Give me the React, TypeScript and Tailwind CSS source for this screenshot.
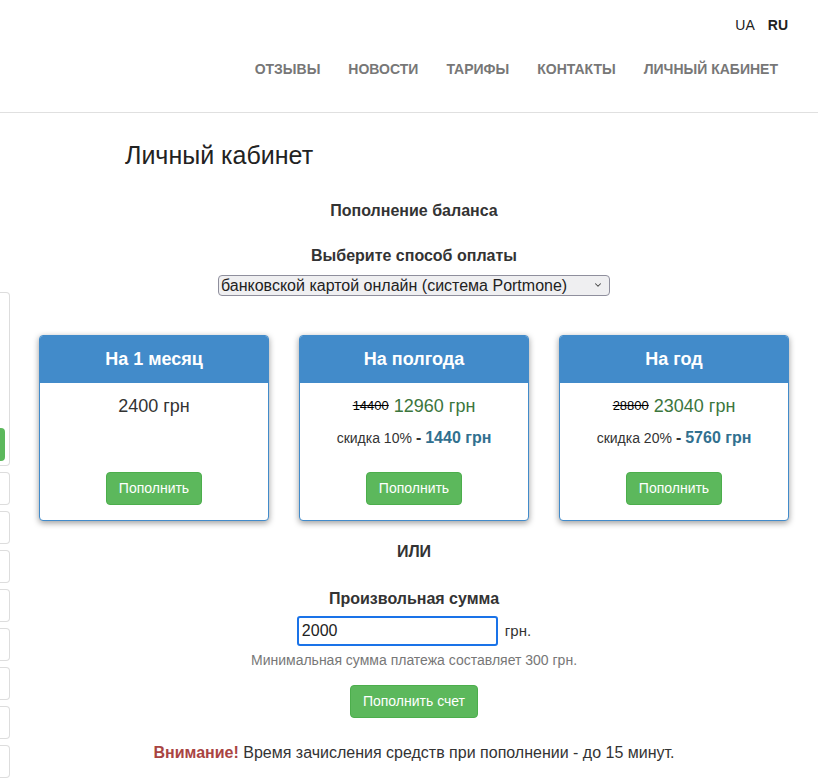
import { ChevronDown } from "lucide-react";

const plans = [
  { title: "На 1 месяц", price: "2400", old: null, discount: null, saved: null },
  { title: "На полгода", price: "12960", old: "14400", discount: "10%", saved: "1440" },
  { title: "На год", price: "23040", old: "28800", discount: "20%", saved: "5760" },
];

const nav = ["Отзывы", "Новости", "Тарифы", "Контакты", "Личный кабинет"];

function PlanCard({ plan }: { plan: (typeof plans)[number] }) {
  return (
    <div className="flex h-[186px] flex-col overflow-hidden rounded-[4px] border border-[#428bca] bg-white shadow-[0_2px_6px_rgba(0,0,0,0.4)]">
      <div className="flex h-[47px] shrink-0 items-center justify-center bg-[#428bca] text-[18px] font-bold text-white">
        {plan.title}
      </div>
      <div className="flex flex-1 flex-col items-center pt-[11px]">
        <div className="flex h-[24px] items-center text-[18px] leading-[24px]">
          {plan.old ? (
            <>
              <span className="mr-[5px] text-[13px] text-black line-through">{plan.old}</span>
              <span className="text-[#3c763d]">{plan.price} грн</span>
            </>
          ) : (
            <span className="text-[#333]">{plan.price} грн</span>
          )}
        </div>
        {plan.discount ? (
          <div className="mt-[10px] flex h-[20px] items-center text-[14px] text-[#333]">
            скидка {plan.discount}
            <span className="ml-[4px] text-[16px] font-bold">-</span>
            <span className="ml-[4px] text-[16px] font-bold text-[#31708f]">{plan.saved} грн</span>
          </div>
        ) : (
          <div className="mt-[10px] h-[20px]" />
        )}
        <button className="mt-[24px] h-[33px] rounded-[4px] border border-[#4cae4c] bg-[#5cb85c] px-[12px] text-[14px] text-white">
          Пополнить
        </button>
      </div>
    </div>
  );
}

function Sidebar() {
  return (
    <div className="flex w-[10px] shrink-0 flex-col gap-[6px] pt-[179px]">
      <div className="flex h-[174px] flex-col justify-end rounded-r-[4px] border border-l-0 border-[#ddd] pb-[4px]">
        <div className="h-[33px] w-[5px] rounded-r-[4px] bg-[#5cb85c]" />
      </div>
      {Array.from({ length: 8 }).map((_, i) => (
        <div key={i} className="h-[33px] rounded-r-[4px] border border-l-0 border-[#ddd]" />
      ))}
    </div>
  );
}

export default function App() {
  return (
    <div className="h-[783px] overflow-hidden bg-white font-['Liberation_Sans',Arial,sans-serif] text-[#333]">
      <header className="h-[113px] border-b border-[#e0e0e0]">
        <div className="flex justify-end gap-[13px] pr-[30px] pt-[16px] text-[14px] leading-[18px] text-[#222]">
          <span>UA</span>
          <span className="font-bold">RU</span>
        </div>
        <nav className="mt-[26px] flex justify-end gap-[28px] pr-[40px] text-[14px] font-bold uppercase leading-[18px] text-[#777]">
          {nav.map((n) => (
            <span key={n}>{n}</span>
          ))}
        </nav>
      </header>

      <div className="flex">
        <Sidebar />
        <main className="flex-1 px-[29px]">
          <h1 className="ml-[86px] mt-[26px] text-[25px] leading-[32px] text-[#222]">Личный кабинет</h1>

          <div className="flex flex-col items-center">
            <h3 className="mt-[30px] text-[16px] font-bold leading-[20px]">Пополнение баланса</h3>
            <h3 className="mt-[25px] text-[16px] font-bold leading-[20px]">Выберите способ оплаты</h3>
            <div className="relative mt-[8px]">
              <select className="h-[21px] w-[392px] appearance-none rounded-[4px] border border-[#8f8f9d] bg-[#efeff1] pl-[2px] text-[16px] leading-[19px] text-[#222] outline-none">
                <option>банковской картой онлайн (система Portmone)</option>
              </select>
              <ChevronDown className="pointer-events-none absolute right-[7px] top-[6px] h-[10px] w-[10px] text-[#444]" strokeWidth={2.5} />
            </div>
          </div>

          <div className="mt-[37px] grid grid-cols-3 gap-[30px]">
            {plans.map((p) => (
              <PlanCard key={p.title} plan={p} />
            ))}
          </div>

          <div className="flex flex-col items-center">
            <div className="mt-[21px] text-[16px] font-bold leading-[20px]">ИЛИ</div>
            <div className="mt-[27px] text-[16px] font-bold leading-[20px]">Произвольная сумма</div>
            <div className="mt-[7px] flex items-center">
              <input
                defaultValue="2000"
                className="h-[30px] w-[201px] rounded-[3px] border-2 border-[#1a73e8] px-[3px] text-[16px] text-[#222] outline-none"
              />
              <span className="ml-[7px] text-[15px]">грн.</span>
            </div>
            <div className="mt-[5px] text-[14px] leading-[18px] text-[#777]">
              Минимальная сумма платежа составляет 300 грн.
            </div>
            <button className="mt-[16px] h-[33px] rounded-[4px] border border-[#4cae4c] bg-[#5cb85c] px-[12px] text-[14px] text-white">
              Пополнить счет
            </button>
            <p className="mt-[25px] text-[16px] leading-[20px]">
              <span className="font-bold text-[#a94442]">Внимание!</span> Время зачисления средств при пополнении - до 15 минут.
            </p>
          </div>
        </main>
      </div>
    </div>
  );
}
